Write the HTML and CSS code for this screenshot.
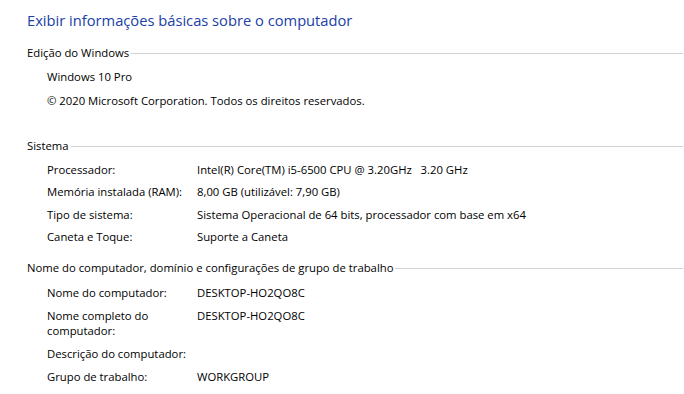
FILE: index.html
```html
<!DOCTYPE html>
<html lang="pt-BR">
<head>
<meta charset="utf-8">
<link rel="stylesheet" href="styles.css">
<title>Sistema</title>
</head>
<body>
<main class="page">
  <h1 class="title">Exibir informações básicas sobre o computador</h1>

  <section class="group group-edition">
    <div class="group-head"><span class="group-label">Edição do Windows</span><span class="rule"></span></div>
    <div class="plain-list">
      <div class="plain-item">Windows 10 Pro</div>
      <div class="plain-item">© 2020 Microsoft Corporation. Todos os direitos reservados.</div>
    </div>
  </section>

  <section class="group group-system">
    <div class="group-head"><span class="group-label">Sistema</span><span class="rule"></span></div>
    <div class="props props-system">
      <div class="prop-label">Processador:</div><div class="prop-value">Intel(R) Core(TM) i5-6500 CPU @ 3.20GHz&nbsp;&nbsp; 3.20 GHz</div>
      <div class="prop-label">Memória instalada (RAM):</div><div class="prop-value">8,00 GB (utilizável: 7,90 GB)</div>
      <div class="prop-label">Tipo de sistema:</div><div class="prop-value">Sistema Operacional de 64 bits, processador com base em x64</div>
      <div class="prop-label">Caneta e Toque:</div><div class="prop-value">Suporte a Caneta</div>
    </div>
  </section>

  <section class="group group-name">
    <div class="group-head"><span class="group-label">Nome do computador, domínio e configurações de grupo de trabalho</span><span class="rule"></span></div>
    <div class="props props-name">
      <div class="prop-label">Nome do computador:</div><div class="prop-value">DESKTOP-HO2QO8C</div>
      <div class="prop-label narrow">Nome completo do computador:</div><div class="prop-value">DESKTOP-HO2QO8C</div>
      <div class="prop-label">Descrição do computador:</div><div class="prop-value"></div>
      <div class="prop-label">Grupo de trabalho:</div><div class="prop-value">WORKGROUP</div>
    </div>
  </section>
</main>
</body>
</html>
```

FILE: styles.css
```css
html, body {
  margin: 0;
  padding: 0;
  background: #ffffff;
}

body {
  font-family: "Open Sans", "Noto Sans", "Liberation Sans", sans-serif;
  font-size: 11.3px;
  line-height: 15px;
  color: #000000;
}

.page {
  padding: 9px 1px 0 27px;
}

.title {
  margin: 0;
  font-size: 14.7px;
  line-height: 22px;
  font-weight: 400;
  color: #2040a8;
}

.group-head {
  display: flex;
  align-items: center;
}

.group-label {
  white-space: nowrap;
}

.rule {
  flex: 1;
  height: 1px;
  margin: 2px 0 0 2px;
  background: #d2d2d2;
}

.group-edition {
  margin-top: 14px;
}

.plain-list {
  display: flex;
  flex-direction: column;
  gap: 9px;
  padding: 9px 0 0 20px;
}

.group-system {
  margin-top: 30px;
}

.props {
  display: grid;
  grid-template-columns: 150px 1fr;
  padding-left: 20px;
}

.props-system {
  row-gap: 7.3px;
  padding-top: 9px;
}

.group-name {
  margin-top: 16.5px;
}

.props-name {
  row-gap: 8px;
  padding-top: 10px;
}

.prop-label.narrow {
  max-width: 120px;
}
```
